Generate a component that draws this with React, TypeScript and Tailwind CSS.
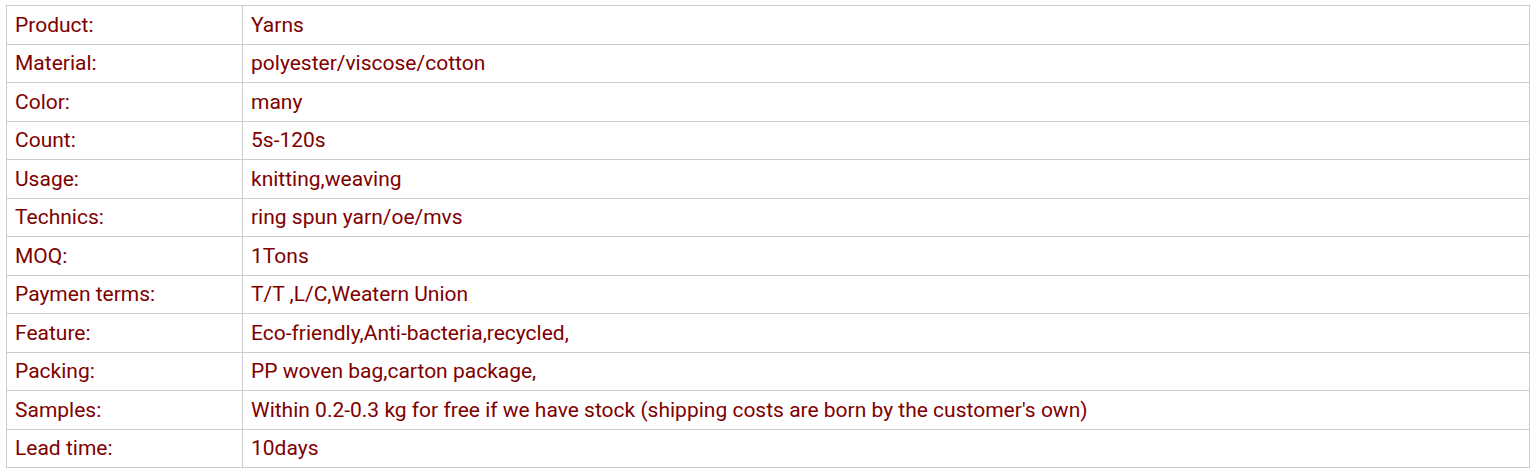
import React from "react";

const specs: [string, string][] = [
  ["Product:", "Yarns"],
  ["Material:", "polyester/viscose/cotton"],
  ["Color:", "many"],
  ["Count:", "5s-120s"],
  ["Usage:", "knitting,weaving"],
  ["Technics:", "ring spun yarn/oe/mvs"],
  ["MOQ:", "1Tons"],
  ["Paymen terms:", "T/T ,L/C,Weatern Union"],
  ["Feature:", "Eco-friendly,Anti-bacteria,recycled,"],
  ["Packing:", "PP woven bag,carton package,"],
  ["Samples:", "Within 0.2-0.3 kg for free if we have stock (shipping costs are born by the customer's own)"],
  ["Lead time:", "10days"],
];

export default function App() {
  return (
    <div className="bg-white px-[6px] pt-[5px] font-['Roboto',sans-serif] text-[#800000]">
      <table className="w-full border-collapse border border-[#cccccc] text-[21px]">
        <tbody>
          {specs.map(([label, value]) => (
            <tr key={label} className="h-[38.5px]">
              <td className="w-[236px] border border-[#cccccc] px-[8px] py-0 align-middle leading-[24px]">
                {label}
              </td>
              <td className="border border-[#cccccc] px-[8px] py-0 align-middle leading-[24px]">
                {value}
              </td>
            </tr>
          ))}
        </tbody>
      </table>
    </div>
  );
}
